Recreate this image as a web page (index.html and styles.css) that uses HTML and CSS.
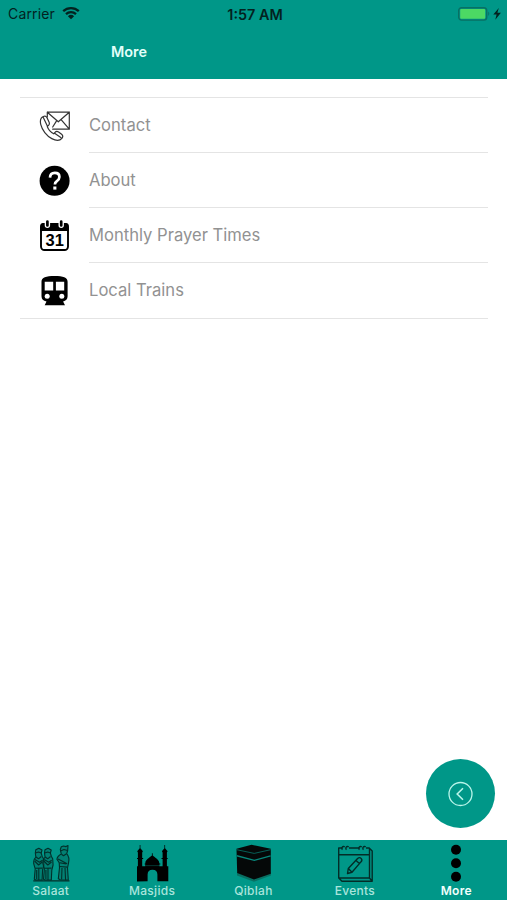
FILE: index.html
```html
<!DOCTYPE html>
<html lang="en">
<head>
<meta charset="utf-8">
<title>More</title>
<link rel="stylesheet" href="styles.css">
</head>
<body>
<div class="app">
  <header class="header">
    <div class="status">
      <div class="status-left"><span class="carrier">Carrier</span>
        <svg class="wifi" width="18" height="14" viewBox="0 0 18 14"><path d="M1.2 5.2a11.4 11.4 0 0 1 15.600 0M4 8.100a7.300 7.300 0 0 1 10 0" fill="none" stroke="#03221f" stroke-width="2.300"/><path d="M9 13.200 5.900 10.200a4.500 4.500 0 0 1 6.200 0z" fill="#03221f"/></svg>
      </div>
      <span class="clock">1:57 AM</span>
      <svg class="battery" width="44" height="14" viewBox="0 0 44 14"><rect x=".7" y=".7" width="28" height="12.4" rx="2.8" fill="none" stroke="#087063" stroke-width="1.4"/><rect x="2.200" y="2" width="25" height="9.800" rx="1" fill="#4cd964"/><path d="M30.200 4.600q2.200 2.200 0 4.400z" fill="#087063"/><path d="m40.800.9-5.500 6.700h3.300l-1.300 5.100 5.600-7h-3.500z" fill="#03221f"/></svg>
    </div>
    <h1 class="title">More</h1>
  </header>

  <main class="content">
    <ul class="menu">
      <li class="row">
        <svg class="row-icon" width="32" height="32" viewBox="0 0 32 32" fill="none" stroke="#333" stroke-width="1.200" stroke-linejoin="round" stroke-linecap="round"><path d="M8.300 7V2.200h22v17H13.700M8.300 2.200l11 9.600 11-9.600M13.700 17l3.700-5.900M30.300 19.200l-8.200-9.500"/><path d="M5 6.200C1.600 7.300.8 10.500 1.800 14.700c1.300 5.300 5.700 11.200 11 13.900 4.300 2.300 7.900 2.300 10.100-.3 1.300-1.600 1.100-2.900-.3-4.100l-3-2.200c-1.500-.9-2.700-.6-3.600.4l-1.300 1.400c-3-1.300-5.200-4-6.500-7.200l1.500-1.500c.8-.9.9-2 .3-3.200L7.900 7.500C7.300 6.300 6.200 5.800 5 6.200zM4.200 7.200l3.900 8.300M15.200 23.100l6.600 4.500"/></svg>
        <span class="row-label">Contact</span>
      </li>
      <li class="row">
        <svg class="row-icon" width="32" height="32" viewBox="0 0 32 32"><circle cx="15.600" cy="15.800" r="15" fill="#000"/><path d="M11 12.600c.1-3.100 2-4.700 4.800-4.700s4.600 1.600 4.600 4.100c0 2.200-1.100 3.200-2.800 4.400-1.300.9-1.700 1.500-1.700 3.200" fill="none" stroke="#fff" stroke-width="2.700"/><rect x="14.300" y="21.500" width="3.100" height="3.100" fill="#fff"/></svg>
        <span class="row-label">About</span>
      </li>
      <li class="row">
        <svg class="row-icon" width="32" height="32" viewBox="0 0 32 32"><rect x="2" y="4" width="27" height="26" rx="3.500" fill="#fff" stroke="#000" stroke-width="1.900"/><path d="M1.200 11V6q0-3 3-3h22.600q3 0 3 3v5z" fill="#000"/><path d="M5.700 0h5.400v5.300a2.700 2.700 0 0 1-5.400 0zM19.500 0h5.400v5.300a2.700 2.700 0 0 1-5.400 0z" fill="#fff"/><path d="M8.400 1.500v4M22.200 1.500v4" stroke="#000" stroke-width="2.700" stroke-linecap="round"/><text class="date" x="15.700" y="25.900" text-anchor="middle">31</text></svg>
        <span class="row-label">Monthly Prayer Times</span>
      </li>
      <li class="row">
        <svg class="row-icon" width="32" height="32" viewBox="0 0 32 32"><path d="M2.500 6.800C2.500 2.500 7 1 15.600 1s13 1.500 13 5.800v14.400c0 2.800-1.800 4.600-4.500 5.200l1.900 3.900H5.700L7.500 26.400c-3.200-.5-5-2.400-5-5.200z" fill="#000"/><path d="M5.700 6.700h8.500v8.800H5.700zM16.900 6.700h8.300v8.800h-8.300z" fill="#fff"/><circle cx="8.200" cy="21.300" r="2.500" fill="#fff"/><circle cx="22.800" cy="21.300" r="2.500" fill="#fff"/></svg>
        <span class="row-label">Local Trains</span>
      </li>
    </ul>
    <button class="fab" aria-label="Back"><svg width="26" height="26" viewBox="0 0 26 26" fill="none" stroke="#b9f5ea" stroke-width="1.300"><circle cx="12.500" cy="13" r="11.500"/><path d="M15 7.200 9.200 13l5.800 5.800" stroke-width="1.600"/></svg></button>
  </main>

  <nav class="tabs">
    <a class="tab">
      <svg width="40" height="40" viewBox="0 0 40 40" fill="#04635a" fill-opacity=".45" stroke="#032f2a" stroke-width="1.100" stroke-linejoin="round"><path d="M2.300 36.800h36.200" stroke-width="1.200"/><g id="figure"><path d="m4.300 9 .5-3.200 3-1.600 3.200 1.800-.8 3.200 1 3.300 1.300 2.200.4 6.300-1.300 5-.5 10H4.800l-1.500-.8.9-10.400-1.500-5.200q-.3-4.600 2.200-6.200z"/><path d="m4.500 9 3-1 2.800 1M5 13l2.500 1.800 2.800-2.300M3.600 17l4 4 3.700-3M4.200 24.300l7-.2M4 15.500l4.500 2.700 3-1.900M7.800 24.500V36M5.700 26v9" fill="none"/></g><use href="#figure" x="9.200"/><path d="m29.300 5.500 1-2.700 2.200-.8 2.500.6 2-1.100-.3 5-1 3.100c2.200 2.500 2.700 6 1.800 9.600l-1 4.800.8 12-8-.2-2-1 1.200-11-.3-5-2.300-3.500c.3-2.500 2-4 4.400-5.200z"/><path d="m29.500 7 3.500-1.500 3.500 1M30.500 10.300l2 1.500 3-2M27 15l3.500 1.700 5.600 3M28.600 18.700l6.600 1.200M28.700 22.500l7.600.6M31 24l-.4 11.500M34 24l.6 12.200" fill="none"/></svg>
      <span>Salaat</span>
    </a>
    <a class="tab">
      <svg width="40" height="40" viewBox="0 0 40 40" fill="#000"><path d="M5 37.500V22.300h.9V8.500L5.200 7.300 7.700 4.200V1h.7v3.200l2.500 3.100-.7 1.200v13.800h3.100v-3.100c0-3.800 4.400-5.300 6.600-7.600V9.300h.8v2.300c2.200 2.300 6.600 3.800 6.600 7.600v3.100h3.300V8.500l-.7-1.200 2.500-3.100V1h.7v3.200l2.500 3.100-.7 1.200v13.800h1.400v15H25.400v-6.800q0-4.700-4.900-4.700t-4.900 4.700v6.800z"/><path d="M5 14.500h6.200M29.500 14.500h6.200M12.700 20h15.600" stroke="#000"/><path d="M13.500 21.600h14" stroke="#06574f" stroke-width=".6"/></svg>
      <span>Masjids</span>
    </a>
    <a class="tab">
      <svg width="40" height="40" viewBox="0 0 40 40"><path d="m4 28 17 6.800L38 28v3.500l-17 6.300-17-6.300z" fill="#087063"/><path d="m3.500 4.800 15-4 19.300 4v25L21 35.500 4.200 29z" fill="#050808"/><path d="m3.700 5.700 17.500 3.700 16.500-3.700" fill="none" stroke="#07685f" stroke-width=".9"/><path d="m3.800 11.800 17.500 4.600 16.300-4.500" fill="none" stroke="#07867a" stroke-width="1.400"/></svg>
      <span>Qiblah</span>
    </a>
    <a class="tab">
      <svg width="40" height="40" viewBox="0 0 40 40" fill="none" stroke="#032c27" stroke-width="1.400" stroke-linejoin="round"><path d="M7.500 4H3.700v30L7 37.300h30.200V7l-3-3H31M14 4h10.500M3.700 10.700h30.800M34.500 4v30H3.700M34.500 34l2.700 3.300"/><path d="M7.500 5.600a1.700 1.700 0 1 1 2.200-2.700M11.500 5.600a1.700 1.700 0 1 1 2.200-2.700M24.500 5.600a1.700 1.700 0 1 1 2.200-2.700M28.500 5.600a1.700 1.700 0 1 1 2.200-2.700"/><path d="m12.500 29.500.8-5 9.300-10q2-1.800 3.700.1 1.300 1.600-.4 3.300L17 28.300zM21 16.500l3.400 3M13.300 24.500l3.700 3.800"/></svg>
      <span>Events</span>
    </a>
    <a class="tab active">
      <svg width="40" height="40" viewBox="0 0 40 40" fill="#000"><circle cx="20" cy="5.800" r="5"/><circle cx="20" cy="19.200" r="5"/><circle cx="20" cy="32.700" r="5"/></svg>
      <span>More</span>
    </a>
  </nav>
</div>
</body>
</html>
```
FILE: styles.css
```css
* { box-sizing: border-box; }
body { margin: 0; background: #fff; font-family: Inter, "Liberation Sans", sans-serif; }
.app { width: 507px; height: 900px; display: flex; flex-direction: column; overflow: hidden; }
.header { height: 79px; flex: none; background: #009788; }
.status { height: 27px; padding: 0 5px 0 8px; display: grid; grid-template-columns: 1fr auto 1fr; align-items: center; color: #03221f; }
.status-left { display: flex; align-items: center; gap: 7px; }
.carrier { font-size: 14px; letter-spacing: .15px; line-height: 28px; }
.wifi { margin-top: -2px; }
.clock { font-size: 14.4px; font-weight: 600; line-height: 27px; padding-top: 1px; }
.battery { justify-self: end; }
.title { margin: 15px 0 0 111px; font-size: 14.4px; line-height: 20px; font-weight: 600; color: #e2fffa; }
.content { flex: 1; display: flex; flex-direction: column; justify-content: space-between; padding: 18px 12px 12px 20px; }
.menu { width: 468px; margin: 0; padding: 0; list-style: none; border-top: 1px solid #e4e4e4; border-bottom: 1px solid #e4e4e4; }
.row { height: 55px; padding-left: 19px; display: grid; grid-template-columns: 50px 1fr; align-items: center; }
.row-label { height: 55px; line-height: 54px; font-size: 16.6px; color: #929292; border-bottom: 1px solid #e4e4e4; }
.row:last-child .row-label { border-bottom: 0; }
.date { font: 700 16.5px "Liberation Sans", sans-serif; }
.fab { align-self: flex-end; width: 69px; height: 69px; padding: 0; border: 0; border-radius: 50%; background: #009788; display: flex; align-items: center; justify-content: center; }
.tabs { height: 60px; flex: none; display: grid; grid-template-columns: repeat(5, 1fr); background: #009788; }
.tab { display: flex; flex-direction: column; align-items: center; padding-top: 4px; color: #a9e5dc; font-size: 12px; font-weight: 500; letter-spacing: .3px; line-height: 14px; }
.tab svg { flex: none; }
.active { color: #f0fffc; font-weight: 600; }
```
